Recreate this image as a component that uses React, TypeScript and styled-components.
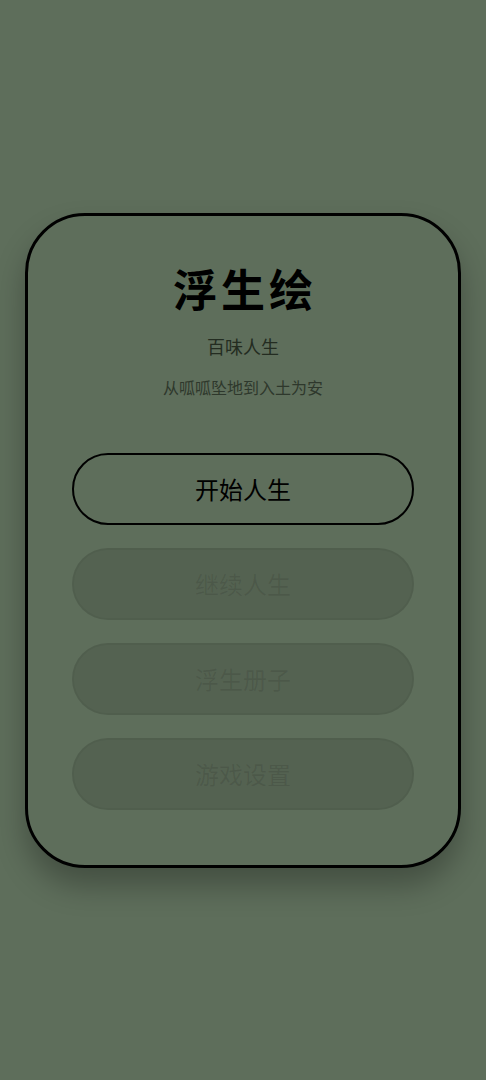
import styled, { createGlobalStyle } from 'styled-components';

const GlobalStyle = createGlobalStyle`
  html, body {
    margin: 0;
    padding: 0;
    background: #5e6e5b;
    font-family: "Noto Sans CJK SC", "Noto Sans", sans-serif;
  }
`;

const Page = styled.main`
  min-height: 100vh;
  display: flex;
  align-items: center;
  justify-content: center;
`;

const Card = styled.section`
  box-sizing: border-box;
  width: 436px;
  height: 655px;
  border: 3px solid #000;
  border-radius: 60px;
  background: #5e6e5b;
  box-shadow: 0 18px 30px rgba(0, 0, 0, 0.28);
  padding: 44px 44px 0;
  display: flex;
  flex-direction: column;
  align-items: center;
`;

const Title = styled.h1`
  margin: 0;
  font-size: 44px;
  font-weight: 700;
  letter-spacing: 4px;
  line-height: 56px;
  color: #000;
  padding-left: 4px;
`;

const Subtitle = styled.p`
  margin: 17px 0 0;
  font-size: 18px;
  line-height: 26px;
  color: #232c21;
`;

const Tagline = styled.p`
  margin: 17px 0 0;
  font-size: 16px;
  line-height: 22px;
  color: #2e382c;
`;

const Menu = styled.nav`
  align-self: stretch;
  margin-top: 55px;
  display: flex;
  flex-direction: column;
  gap: 23px;
`;

const MenuButton = styled.button<{ $active?: boolean }>`
  box-sizing: border-box;
  height: 72px;
  border-radius: 36px;
  font-family: inherit;
  font-size: 24px;
  cursor: pointer;
  ${({ $active }) =>
    $active
      ? `
    background: transparent;
    border: 2px solid #000;
    color: #000;
  `
      : `
    background: rgba(0, 0, 0, 0.1);
    border: 2px solid rgba(0, 0, 0, 0.05);
    color: rgba(0, 0, 0, 0.09);
  `}
`;

const items = [
  { label: '开始人生', active: true },
  { label: '继续人生', active: false },
  { label: '浮生册子', active: false },
  { label: '游戏设置', active: false },
];

const App = () => {
  return (
    <>
      <GlobalStyle />
      <Page>
        <Card>
          <Title>浮生绘</Title>
          <Subtitle>百味人生</Subtitle>
          <Tagline>从呱呱坠地到入土为安</Tagline>
          <Menu>
            {items.map((item) => (
              <MenuButton key={item.label} $active={item.active} disabled={!item.active}>
                {item.label}
              </MenuButton>
            ))}
          </Menu>
        </Card>
      </Page>
    </>
  );
};

export default App;
